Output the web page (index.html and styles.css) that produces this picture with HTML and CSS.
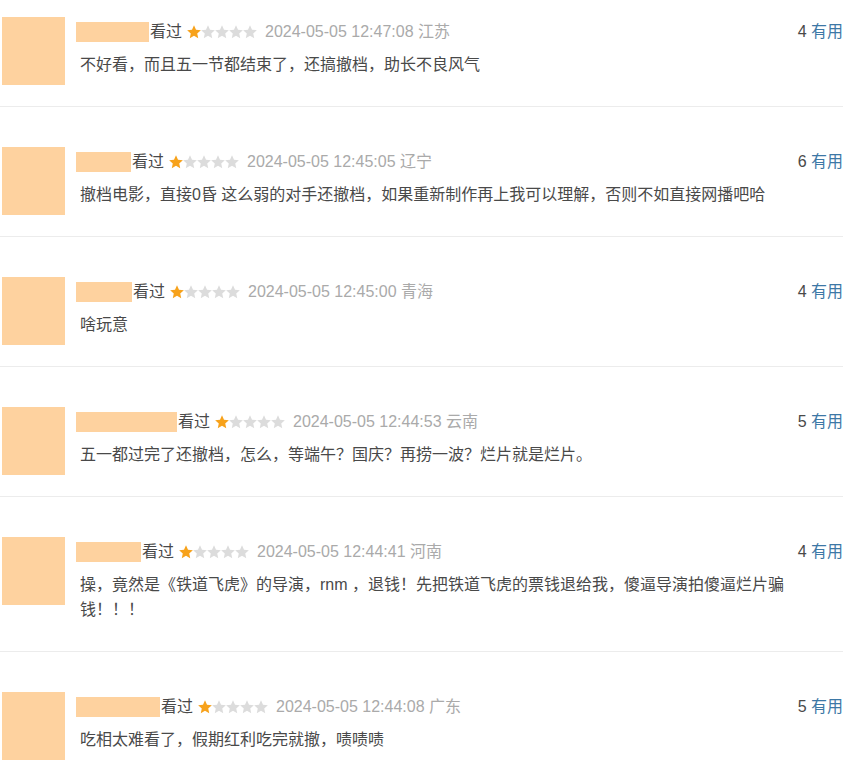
FILE: index.html
```html
<!DOCTYPE html>
<html lang="zh-CN">
<head>
<meta charset="utf-8">
<title>短评</title>
<link rel="stylesheet" href="styles.css">
</head>
<body>
<svg class="defs" width="0" height="0" aria-hidden="true">
  <symbol id="star" viewBox="0 0 14 14">
    <polygon points="7,0.2 9,4.65 13.85,5.18 10.23,8.45 11.23,13.22 7,10.8 2.77,13.22 3.77,8.45 0.15,5.18 5,4.65"/>
  </symbol>
</svg>
<div class="list">

  <div class="item first">
    <div class="avatar"></div>
    <div class="main">
      <div class="head">
        <span class="name" style="width:73px"></span>
        <span class="seen">看过</span>
        <svg class="stars" width="70" height="14" viewBox="0 0 70 14"><use href="#star" x="0" y="0" width="14" height="14" class="on"/><use href="#star" x="14" y="0" width="14" height="14" class="off"/><use href="#star" x="28" y="0" width="14" height="14" class="off"/><use href="#star" x="42" y="0" width="14" height="14" class="off"/><use href="#star" x="56" y="0" width="14" height="14" class="off"/></svg>
        <span class="time">2024-05-05 12:47:08 江苏</span>
        <span class="votes"><span class="count">4</span> <span class="useful">有用</span></span>
      </div>
      <p class="text">不好看，而且五一节都结束了，还搞撤档，助长不良风气</p>
    </div>
  </div>

  <div class="item">
    <div class="avatar"></div>
    <div class="main">
      <div class="head">
        <span class="name" style="width:55px"></span>
        <span class="seen">看过</span>
        <svg class="stars" width="70" height="14" viewBox="0 0 70 14"><use href="#star" x="0" y="0" width="14" height="14" class="on"/><use href="#star" x="14" y="0" width="14" height="14" class="off"/><use href="#star" x="28" y="0" width="14" height="14" class="off"/><use href="#star" x="42" y="0" width="14" height="14" class="off"/><use href="#star" x="56" y="0" width="14" height="14" class="off"/></svg>
        <span class="time">2024-05-05 12:45:05 辽宁</span>
        <span class="votes"><span class="count">6</span> <span class="useful">有用</span></span>
      </div>
      <p class="text">撤档电影，直接0昏 这么弱的对手还撤档，如果重新制作再上我可以理解，否则不如直接网播吧哈</p>
    </div>
  </div>

  <div class="item">
    <div class="avatar"></div>
    <div class="main">
      <div class="head">
        <span class="name" style="width:56px"></span>
        <span class="seen">看过</span>
        <svg class="stars" width="70" height="14" viewBox="0 0 70 14"><use href="#star" x="0" y="0" width="14" height="14" class="on"/><use href="#star" x="14" y="0" width="14" height="14" class="off"/><use href="#star" x="28" y="0" width="14" height="14" class="off"/><use href="#star" x="42" y="0" width="14" height="14" class="off"/><use href="#star" x="56" y="0" width="14" height="14" class="off"/></svg>
        <span class="time">2024-05-05 12:45:00 青海</span>
        <span class="votes"><span class="count">4</span> <span class="useful">有用</span></span>
      </div>
      <p class="text">啥玩意</p>
    </div>
  </div>

  <div class="item">
    <div class="avatar"></div>
    <div class="main">
      <div class="head">
        <span class="name" style="width:101px"></span>
        <span class="seen">看过</span>
        <svg class="stars" width="70" height="14" viewBox="0 0 70 14"><use href="#star" x="0" y="0" width="14" height="14" class="on"/><use href="#star" x="14" y="0" width="14" height="14" class="off"/><use href="#star" x="28" y="0" width="14" height="14" class="off"/><use href="#star" x="42" y="0" width="14" height="14" class="off"/><use href="#star" x="56" y="0" width="14" height="14" class="off"/></svg>
        <span class="time">2024-05-05 12:44:53 云南</span>
        <span class="votes"><span class="count">5</span> <span class="useful">有用</span></span>
      </div>
      <p class="text">五一都过完了还撤档，怎么，等端午？国庆？再捞一波？烂片就是烂片。</p>
    </div>
  </div>

  <div class="item">
    <div class="avatar"></div>
    <div class="main">
      <div class="head">
        <span class="name" style="width:65px"></span>
        <span class="seen">看过</span>
        <svg class="stars" width="70" height="14" viewBox="0 0 70 14"><use href="#star" x="0" y="0" width="14" height="14" class="on"/><use href="#star" x="14" y="0" width="14" height="14" class="off"/><use href="#star" x="28" y="0" width="14" height="14" class="off"/><use href="#star" x="42" y="0" width="14" height="14" class="off"/><use href="#star" x="56" y="0" width="14" height="14" class="off"/></svg>
        <span class="time">2024-05-05 12:44:41 河南</span>
        <span class="votes"><span class="count">4</span> <span class="useful">有用</span></span>
      </div>
      <p class="text">操，竟然是《铁道飞虎》的导演，rnm ，退钱！先把铁道飞虎的票钱退给我，傻逼导演拍傻逼烂片骗钱！！！</p>
    </div>
  </div>

  <div class="item last">
    <div class="avatar"></div>
    <div class="main">
      <div class="head">
        <span class="name" style="width:84px"></span>
        <span class="seen">看过</span>
        <svg class="stars" width="70" height="14" viewBox="0 0 70 14"><use href="#star" x="0" y="0" width="14" height="14" class="on"/><use href="#star" x="14" y="0" width="14" height="14" class="off"/><use href="#star" x="28" y="0" width="14" height="14" class="off"/><use href="#star" x="42" y="0" width="14" height="14" class="off"/><use href="#star" x="56" y="0" width="14" height="14" class="off"/></svg>
        <span class="time">2024-05-05 12:44:08 广东</span>
        <span class="votes"><span class="count">5</span> <span class="useful">有用</span></span>
      </div>
      <p class="text">吃相太难看了，假期红利吃完就撤，啧啧啧</p>
    </div>
  </div>

</div>
</body>
</html>
```

FILE: styles.css
```css
html, body {
  margin: 0;
  padding: 0;
  background: #fff;
}

body {
  font-family: "Liberation Sans", "Noto Sans CJK SC", sans-serif;
  font-size: 16px;
  color: #494949;
}

.defs {
  display: block;
  width: 0;
  height: 0;
  overflow: hidden;
}

.list {
  width: 843px;
}

.item {
  display: flex;
  align-items: flex-start;
  padding: 45px 0 29px 1px;
  border-bottom: 1px solid #ececec;
}

.item.first {
  padding-top: 22px;
}

.item.last {
  border-bottom: none;
}

.avatar {
  flex: none;
  width: 63px;
  height: 68px;
  margin-top: -5px;
  margin-bottom: -20px;
  margin-left: 1px;
  background: #fed29f;
}

.main {
  flex: 1;
  margin-left: 11px;
  min-width: 0;
}

.head {
  display: flex;
  align-items: center;
  height: 20px;
  line-height: 20px;
  white-space: nowrap;
}

.name {
  display: inline-block;
  height: 20px;
  background: #fed29f;
}

.seen {
  margin-left: 1px;
  color: #494949;
}

.stars {
  margin-left: 5px;
  flex: none;
}

.stars .on {
  fill: #f7a21b;
}

.stars .off {
  fill: #dcdcdc;
}

.time {
  margin-left: 8px;
  color: #aaa;
}

.votes {
  margin-left: auto;
  color: #494949;
}

.useful {
  color: #3d78a6;
}

.text {
  margin: 10px 0 0;
  padding-left: 4px;
  padding-right: 38px;
  line-height: 25px;
  color: #494949;
}
```
